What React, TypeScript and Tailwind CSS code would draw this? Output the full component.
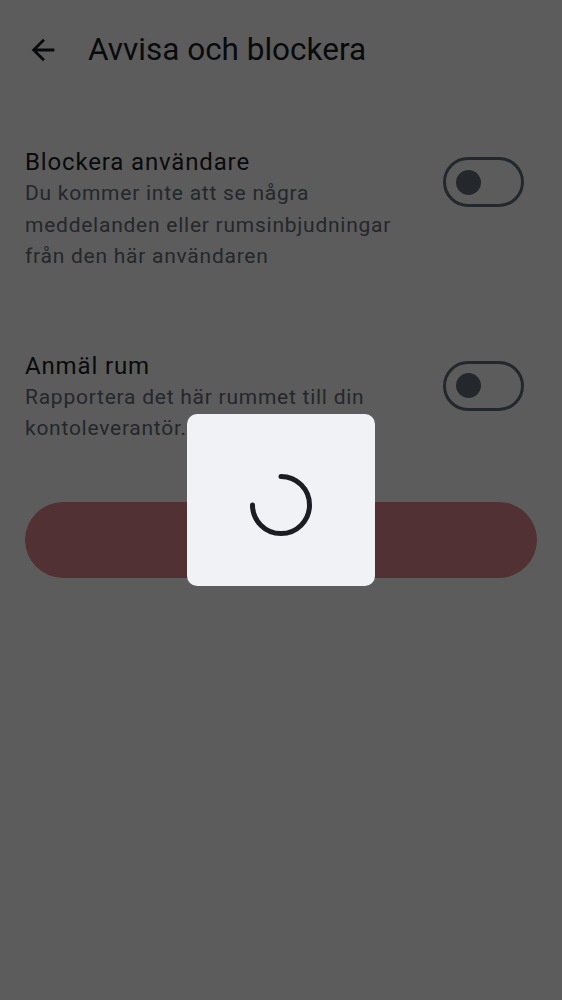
import React from "react";

interface ToggleRowProps {
  title: string;
  description: string;
}

function ToggleRow({ title, description }: ToggleRowProps) {
  return (
    <div className="flex items-start justify-between pl-[25px] pr-[38px]">
      <div className="flex flex-col w-[400px]">
        <span className="text-[24px] leading-[32px] tracking-[0.85px] text-[#1b1d22]">{title}</span>
        <span className="text-[21px] leading-[31.5px] tracking-[0.75px] text-[#656d77]">
          {description}
        </span>
      </div>
      <div className="mt-[11px] shrink-0 w-[81px] h-[50px] rounded-full border-[3px] border-[#656d77] flex items-center pl-[10px]">
        <div className="w-[25px] h-[25px] rounded-full bg-[#656d77]" />
      </div>
    </div>
  );
}

export default function App() {
  return (
    <div
      className="relative w-[562px] h-[1000px] bg-white overflow-hidden"
      style={{ fontFamily: "Roboto, 'Noto Sans', sans-serif" }}
    >
      <div className="h-[100px] flex items-center pl-[26px] gap-[28px]">
        <svg width="34" height="34" viewBox="0 0 24 24" fill="#1b1d22">
          <path d="M20 11H7.83l5.59-5.59L12 4l-8 8 8 8 1.41-1.41L7.83 13H20v-2z" />
        </svg>
        <h1 className="text-[31.5px] leading-[40px] text-[#1b1d22]">Avvisa och blockera</h1>
      </div>

      <div className="flex flex-col pt-[46px] gap-[77px]">
        <ToggleRow
          title="Blockera användare"
          description="Du kommer inte att se några meddelanden eller rumsinbjudningar från den här användaren"
        />
        <ToggleRow
          title="Anmäl rum"
          description="Rapportera det här rummet till din kontoleverantör."
        />
      </div>

      <div className="px-[25px] mt-[57px]">
        <button className="w-full h-[76px] rounded-full bg-[#e48890]" />
      </div>

      <div className="absolute inset-0 bg-black/[0.64] flex justify-center pt-[414px]">
        <div className="w-[188px] h-[172px] rounded-[10px] bg-[#f0f2f5] flex items-center justify-center pt-[9px]">
          <svg width="62" height="62" viewBox="0 0 62 62" fill="none">
            <path
              d="M31 2.5 A28.5 28.5 0 1 1 2.5 31"
              stroke="#1b1d22"
              strokeWidth="5"
              strokeLinecap="round"
            />
          </svg>
        </div>
      </div>
    </div>
  );
}
